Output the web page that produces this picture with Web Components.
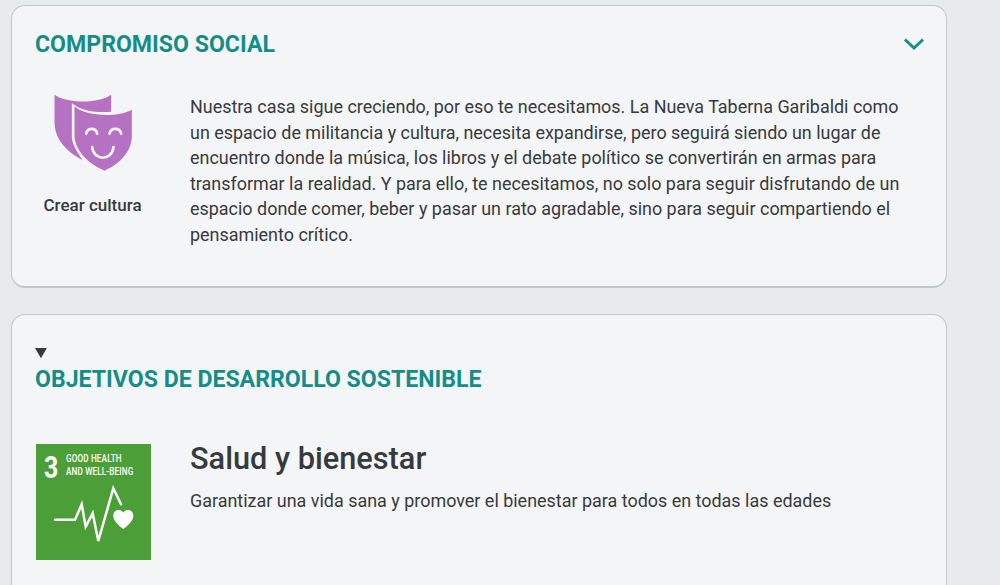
<!DOCTYPE html>
<html lang="es">
<head>
<meta charset="utf-8">
<title>Compromiso social</title>
<style>
  html { overflow: hidden; height: 585px; }
  body {
    margin: 0;
    padding: 5px 53px 0 11px;
    background: #e8ebec;
    color: #373a3c;
    font: 17.96px/25.6px Roboto, sans-serif;
  }
</style>
</head>
<body>
<commitment-card heading="COMPROMISO SOCIAL">
  <value-item label="Crear cultura"></value-item>
  Nuestra casa sigue creciendo, por eso te necesitamos. La Nueva Taberna Garibaldi como un espacio de militancia y cultura, necesita expandirse, pero seguirá siendo un lugar de encuentro donde la música, los libros y el debate político se convertirán en armas para transformar la realidad. Y para ello, te necesitamos, no solo para seguir disfrutando de un espacio donde comer, beber y pasar un rato agradable, sino para seguir compartiendo el pensamiento crítico.
</commitment-card>

<goals-card heading="OBJETIVOS DE DESARROLLO SOSTENIBLE">
  <goal-row title="Salud y bienestar" text="Garantizar una vida sana y promover el bienestar para todos en todas las edades"></goal-row>
</goals-card>

<script>
// shared look of the two white panels
const cardCss = `
  :host {
    display: block;
    background: #f4f5f7;
    border: 1px solid #c4c7c9;
    border-bottom-width: 2px;
    border-radius: 14px;
    box-sizing: border-box;
  }
  h2 {
    margin: 0;
    color: #148d88;
    font: 700 23.1px/28px Roboto, sans-serif;
  }
`;

class CommitmentCard extends HTMLElement {
  constructor() {
    super();
    this.attachShadow({ mode: "open" });
    this.shadowRoot.innerHTML = `
      <style>
        ${cardCss}
        :host { height: 283px; margin-bottom: 26px; padding: 25px 21px 0 23px; }
        header { display: flex; justify-content: space-between; align-items: center; }
        svg { width: 22px; height: 14px; margin-top: -2px; }
        .body { display: flex; gap: 40px; margin-top: 35px; }
        .text { flex: 1; padding-right: 15px; }
      </style>
      <header>
        <h2>${this.getAttribute("heading")}</h2>
        <svg viewBox="0 0 22 14"><path d="M2 2.500 11 11 20 2.500" fill="none" stroke="#148d88" stroke-width="3"/></svg>
      </header>
      <div class="body">
        <slot name="side"></slot>
        <div class="text"><slot></slot></div>
      </div>
    `;
    const item = this.querySelector("value-item");
    if (item) item.slot = "side";
  }
}

class ValueItem extends HTMLElement {
  constructor() {
    super();
    this.attachShadow({ mode: "open" });
    this.shadowRoot.innerHTML = `
      <style>
        :host { display: flex; flex-direction: column; align-items: center; width: 115px; }
        svg { width: 80px; height: 80px; margin-top: -1px; }
        span { margin-top: 20px; font: 500 17px/24px Roboto, sans-serif; color: #373a3c; white-space: nowrap; }
      </style>
      <svg viewBox="10.500 10 240 240">
        <path fill="#b672c2" d="M15 15C50 42 150 42 185 15V66C140 70 95 65 67 40V140C67 165 85 190 100 212 50 185 15 150 15 95Z"/>
        <path fill="#b672c2" d="M75 50C105 80 205 85 247 60V140C247 185 210 225 165 243 120 225 77 185 75 140Z"/>
        <g fill="none" stroke="#f4f5f7" stroke-width="8" stroke-linecap="round">
          <path d="M110 132C114 113 139 113 143 132"/>
          <path d="M180 132C184 113 211 113 215 132"/>
          <path d="M128 172C132 215 188 215 192 172"/>
        </g>
      </svg>
      <span>${this.getAttribute("label")}</span>
    `;
  }
}

class GoalsCard extends HTMLElement {
  constructor() {
    super();
    this.attachShadow({ mode: "open" });
    this.shadowRoot.innerHTML = `
      <style>
        ${cardCss}
        :host { height: 320px; padding: 25px 21px 0 23px; }
        summary { color: #373a3c; font-size: 17.96px; line-height: 25.6px; cursor: pointer; }
        ::slotted(goal-row) { margin-top: 50px; }
      </style>
      <details open>
        <summary><h2>${this.getAttribute("heading")}</h2></summary>
        <slot></slot>
      </details>
    `;
  }
}

class GoalRow extends HTMLElement {
  constructor() {
    super();
    this.attachShadow({ mode: "open" });
    this.shadowRoot.innerHTML = `
      <style>
        :host { display: flex; gap: 39px; }
        h3 { margin: -3px 0 11px; font: 500 30.72px/36px Roboto, sans-serif; color: #373a3c; }
        p { margin: 0; }
      </style>
      <sdg-badge number="3" line1="GOOD HEALTH" line2="AND WELL-BEING"></sdg-badge>
      <div>
        <h3>${this.getAttribute("title")}</h3>
        <p>${this.getAttribute("text")}</p>
      </div>
    `;
  }
}

class SdgBadge extends HTMLElement {
  constructor() {
    super();
    this.attachShadow({ mode: "open" });
    this.shadowRoot.innerHTML = `
      <style>
        :host {
          display: block; flex: none; position: relative;
          width: 115px; height: 116px; margin-left: 1px;
          background: #4c9f38; color: #fff; overflow: hidden;
        }
        .num { position: absolute; left: 8px; top: 6px; font: 700 32px/34px Roboto, sans-serif; transform: scaleX(.78); transform-origin: left; }
        .cap {
          position: absolute; left: 30px; top: 8px; width: 110px;
          font: 500 11.5px/13.5px Roboto, sans-serif; letter-spacing: .2px;
          transform: scaleX(.71); transform-origin: left; white-space: nowrap;
        }
        svg { position: absolute; inset: 0; width: 115px; height: 116px; }
      </style>
      <span class="num">${this.getAttribute("number")}</span>
      <div class="cap">${this.getAttribute("line1")}<br>${this.getAttribute("line2")}</div>
      <svg viewBox="0 0 115 116">
        <path fill="none" stroke="#fff" stroke-width="2.500" stroke-linejoin="miter" stroke-linecap="round" d="M19 75.700H39L45.700 60.300 49.700 82.700 56.700 69.300 62.300 97 77.300 44.300 85 60.300"/>
        <path fill="#fff" d="M87.300 85C82 81 77.300 76.500 77.300 71.500 77.300 68 80 66 82.800 66 84.800 66 86.300 67 87.300 68.500 88.300 67 89.800 66 91.800 66 94.600 66 97.300 68 97.300 71.500 97.300 76.500 92.600 81 87.300 85Z"/>
      </svg>
    `;
  }
}

customElements.define("value-item", ValueItem);
customElements.define("sdg-badge", SdgBadge);
customElements.define("goal-row", GoalRow);
customElements.define("commitment-card", CommitmentCard);
customElements.define("goals-card", GoalsCard);
</script>
</body>
</html>
